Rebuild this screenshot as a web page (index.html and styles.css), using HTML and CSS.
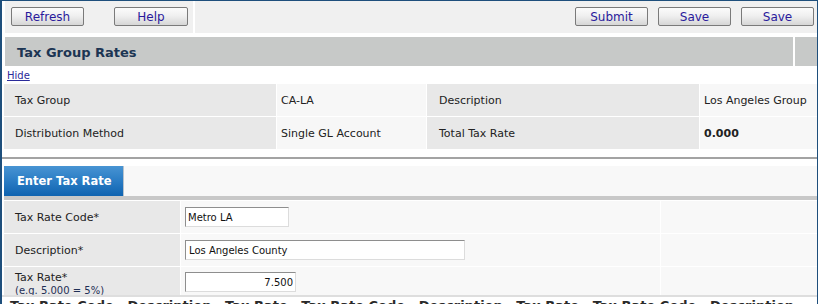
FILE: index.html
```html
<!DOCTYPE html>
<html>
<head>
<meta charset="utf-8">
<link rel="stylesheet" href="styles.css">
</head>
<body>
<div class="frame">
  <div class="toolbar">
    <div class="tb-left">
      <button class="btn">Refresh</button>
      <button class="btn btn-help">Help</button>
    </div>
    <div class="tb-right">
      <button class="btn">Submit</button>
      <button class="btn">Save</button>
      <button class="btn">Save</button>
    </div>
  </div>
  <div class="titlebar">
    <div class="title">Tax Group Rates</div>
    <div class="title-end"></div>
  </div>
  <div class="hide-row"><a class="hide" href="#">Hide</a></div>
  <div class="info">
    <div class="lbl">Tax Group</div>
    <div class="val">CA-LA</div>
    <div class="lbl">Description</div>
    <div class="val val-last">Los Angeles Group</div>
    <div class="lbl">Distribution Method</div>
    <div class="val">Single GL Account</div>
    <div class="lbl">Total Tax Rate</div>
    <div class="val val-last bold">0.000</div>
  </div>
  <div class="sep"></div>
  <div class="tabs">
    <div class="tab">Enter Tax Rate</div>
  </div>
  <div class="form">
    <div class="flbl">Tax Rate Code*</div>
    <div class="fval"><input class="inp inp-code" type="text" value="Metro LA"></div>
    <div class="fext"></div>
    <div class="flbl">Description*</div>
    <div class="fval"><input class="inp inp-desc" type="text" value="Los Angeles County"></div>
    <div class="fext"></div>
    <div class="flbl flbl-rate"><span>Tax Rate*</span><span class="hint">(e.g. 5.000 = 5%)</span></div>
    <div class="fval fval-rate"><input class="inp inp-rate" type="text" value="7.500"></div>
    <div class="fext"></div>
  </div>
  <div class="next">Tax Rate Code &nbsp; Description &nbsp; Tax Rate &nbsp; Tax Rate Code &nbsp; Description &nbsp; Tax Rate &nbsp; Tax Rate Code &nbsp; Description</div>
</div>
</body>
</html>
```
FILE: styles.css
```css
html, body {
  margin: 0;
  padding: 0;
  background: #ffffff;
}
body {
  width: 818px;
  height: 304px;
  overflow: hidden;
  font-family: "DejaVu Sans", Verdana, sans-serif;
  font-size: 11px;
  color: #222222;
}
.frame {
  box-sizing: border-box;
  width: 818px;
  height: 304px;
  border-top: 1px solid #1e4f7c;
  border-left: 2px solid #1e4f7c;
  border-right: 1px solid #1e4f7c;
  overflow: hidden;
}
.toolbar {
  display: flex;
  height: 32px;
  margin-left: 3px;
}
.tb-left {
  width: 188px;
  background: #f0f0f0;
  display: flex;
  align-items: flex-start;
  padding: 6px 0 0 6px;
  box-sizing: border-box;
  gap: 30px;
}
.tb-right {
  flex: 1;
  margin-left: 2px;
  background: #f0f0f0;
  display: flex;
  justify-content: flex-end;
  align-items: flex-start;
  padding: 6px 3px 0 0;
  gap: 10px;
}
.btn {
  box-sizing: border-box;
  width: 73px;
  height: 19px;
  margin: 0;
  padding: 0;
  border: 1px solid #7a7a7a;
  border-radius: 2px;
  background: linear-gradient(#fbfbfb 0%, #f0f0f0 45%, #d6d6d6 100%);
  font-family: "DejaVu Sans", Verdana, sans-serif;
  font-size: 12px;
  line-height: 16px;
  color: #2a1a9c;
}
.btn-help { width: 74px; }
.titlebar {
  display: flex;
  height: 29px;
  margin: 4px 0 0 3px;
  gap: 2px;
}
.title {
  width: 788px;
  background: #c7c9c8;
  font-weight: bold;
  font-size: 13px;
  color: #1c3553;
  line-height: 31px;
  padding-left: 12px;
  box-sizing: border-box;
}
.title-end {
  flex: 1;
  background: #c7c9c8;
}
.hide-row {
  height: 18px;
  padding-left: 5px;
  line-height: 20px;
}
.hide {
  font-size: 10px;
  color: #2a2a9a;
}
.info {
  display: grid;
  grid-template-columns: 272px 149px 272px 1fr;
  grid-auto-rows: 32px;
  gap: 1px;
  margin-left: 2px;
}
.lbl {
  background: #e8e8e8;
  padding-left: 11px;
  line-height: 34px;
  white-space: nowrap;
}
.info .lbl:nth-child(3), .info .lbl:nth-child(7) { padding-left: 12px; }
.val {
  background: #f7f7f7;
  padding-left: 4px;
  line-height: 34px;
  white-space: nowrap;
  overflow: hidden;
}
.bold { font-weight: bold; }
.sep {
  height: 2px;
  background: #a3a3a3;
  margin-top: 8px;
}
.tabs {
  margin: 7px 0 0 2px;
  height: 30px;
  background: #f8f8f8;
  border-bottom: 4px solid #c8c8c8;
  display: flex;
}
.tab {
  box-sizing: border-box;
  width: 120px;
  height: 30px;
  background: linear-gradient(#4894d3 0%, #2a7cc4 50%, #0f63b0 100%);
  border-right: 1px solid #b9c3cc;
  color: #ffffff;
  font-weight: bold;
  font-size: 11.5px;
  line-height: 31px;
  padding-left: 13px;
  white-space: nowrap;
}
.form {
  display: grid;
  grid-template-columns: 176px 479px 1fr;
  grid-template-rows: 32px 32px 28px;
  gap: 1px;
  margin: 1px 0 0 2px;
  background: #ffffff;
}
.flbl {
  background: #e8e8e8;
  padding-left: 11px;
  line-height: 33px;
  white-space: nowrap;
}
.flbl-rate {
  display: flex;
  flex-direction: column;
  line-height: 13px;
  padding-top: 4px;
  box-sizing: border-box;
  overflow: hidden;
}
.hint {
  font-size: 10px;
  color: #1f2f55;
  line-height: 13px;
}
.fval {
  background: #f8f8f8;
  display: flex;
  align-items: center;
  padding-left: 4px;
}
.fval-rate { align-items: flex-start; padding-top: 5px; box-sizing: border-box; }
.fext { background: #f8f8f8; }
.inp {
  box-sizing: border-box;
  height: 20px;
  margin: 0;
  padding: 0 2px;
  border: 1px solid #dcdcdc;
  border-top-color: #8e8e8e;
  border-left-color: #8e8e8e;
  background: #ffffff;
  font-family: "DejaVu Sans", Verdana, sans-serif;
  font-size: 10px;
  color: #111111;
  outline: none;
}
.inp-code { width: 104px; }
.inp-desc { width: 280px; padding-left: 3px; }
.inp-rate { width: 111px; text-align: right; }
.next {
  border-top: 2px solid #dedede;
  padding: 1px 0 0 8px;
  font-weight: bold;
  font-size: 13px;
  color: #2a2a2a;
  white-space: nowrap;
  line-height: 16px;
}
```
